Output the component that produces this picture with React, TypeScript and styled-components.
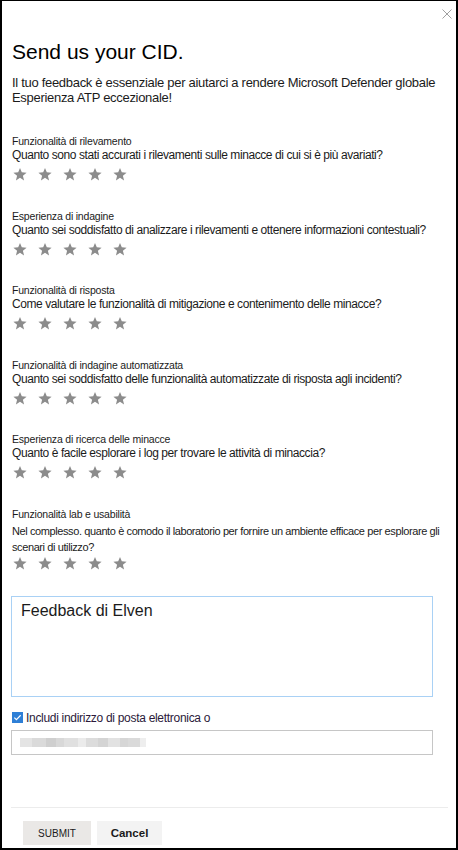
import React from "react";
import styled, { createGlobalStyle } from "styled-components";

const Global = createGlobalStyle`
  html, body { margin: 0; padding: 0; background: #fff; }
  body { font-family: "Liberation Sans", Arial, sans-serif; color: #1b1b1b; }
  * { box-sizing: border-box; }
`;

const Frame = styled.div`
  position: relative;
  width: 458px;
  height: 850px;
  border-left: 2px solid #000;
  border-right: 2px solid #000;
  border-bottom: 2px solid #000;
  border-top: 1px solid #000;
  display: flex;
  flex-direction: column;
`;

const Close = styled.button`
  position: absolute;
  top: 7px;
  right: 3px;
  width: 12px;
  height: 12px;
  padding: 0;
  border: 0;
  background: transparent;
  display: flex;
  align-items: center;
  justify-content: center;
`;

const Body = styled.div`
  flex: 1;
  padding: 38px 0 0 10px;
  display: flex;
  flex-direction: column;
`;

const Title = styled.h1`
  margin: 0;
  font-size: 21px;
  font-weight: 400;
  color: #000;
  line-height: 26px;
`;

const Intro = styled.p`
  margin: 10px 0 0;
  font-size: 13px;
  line-height: 15px;
  color: #1b1b1b;
  letter-spacing: -0.3px;
  width: 440px;
`;

const Sections = styled.div`
  margin-top: 29px;
  display: flex;
  flex-direction: column;
  gap: 26.6px;
`;

const Section = styled.div`
  display: flex;
  flex-direction: column;
`;

const Label = styled.div`
  font-size: 10.5px;
  line-height: 14px;
  color: #1b1b1b;
  letter-spacing: -0.2px;
`;

const Question = styled.div<{ $tall?: boolean }>`
  font-size: ${(p) => (p.$tall ? "11px" : "12px")};
  line-height: ${(p) => (p.$tall ? "16px" : "15px")};
  margin-top: ${(p) => (p.$tall ? "2px" : "0")};
  color: #1b1b1b;
  letter-spacing: ${(p) => (p.$tall ? "-0.4px" : "-0.42px")};
  width: ${(p) => (p.$tall ? "442px" : "432px")};
`;

const Stars = styled.div<{ $tight?: boolean }>`
  display: flex;
  gap: 11px;
  margin-top: ${(p) => (p.$tight ? "0" : "3px")};
  padding-left: 1px;
  height: 16px;
  align-items: center;
`;

const Feedback = styled.textarea`
  margin-top: 25px;
  margin-left: -1px;
  width: 422px;
  height: 101px;
  border: 1px solid #a9d1f5;
  resize: none;
  padding: 5px 9px;
  font-family: "Liberation Sans", Arial, sans-serif;
  font-size: 16px;
  color: #1b1b1b;
  outline: none;
`;

const CheckRow = styled.label`
  margin-top: 14px;
  display: flex;
  align-items: center;
  gap: 3px;
  font-size: 12px;
  color: #2b1a3a;
  letter-spacing: -0.3px;
`;

const Box = styled.span`
  width: 11px;
  height: 11px;
  background: #2e7fd6;
  display: inline-flex;
  align-items: center;
  justify-content: center;
`;

const Email = styled.div`
  margin-top: 5px;
  margin-left: -1px;
  width: 422px;
  height: 25px;
  border: 1px solid #c6c6c6;
  display: flex;
  align-items: center;
  padding-left: 8px;
`;

const Blur = styled.span<{ $c: string }>`
  display: inline-block;
  height: 9px;
  background: ${(p) => p.$c};
`;

const Footer = styled.div`
  border-top: 1px solid #ececec;
  margin: 0 8px 0 9px;
  padding: 13px 0 3px 12px;
  display: flex;
  gap: 6px;
`;

const Btn = styled.button<{ $primary?: boolean }>`
  height: 24px;
  border: 0;
  padding: 0;
  width: ${(p) => (p.$primary ? "68px" : "65px")};
  background: ${(p) => (p.$primary ? "#eae8e6" : "#f3f3f3")};
  color: #1b1b1b;
  font-family: "Liberation Sans", Arial, sans-serif;
  font-size: ${(p) => (p.$primary ? "10px" : "11.5px")};
  font-weight: ${(p) => (p.$primary ? 400 : 700)};
`;

const StarIcon = () => (
  <svg width="14" height="14" viewBox="0 0 24 24">
    <path
      d="M12 1.5l3.1 7.6 8.2.6-6.3 5.3 2 8-7-4.4-7 4.4 2-8L.7 9.7l8.2-.6z"
      fill="#8c8c8c"
    />
  </svg>
);

const sections = [
  {
    label: "Funzionalità di rilevamento",
    q: "Quanto sono stati accurati i rilevamenti sulle minacce di cui si è più avariati?",
  },
  {
    label: "Esperienza di indagine",
    q: "Quanto sei soddisfatto di analizzare i rilevamenti e ottenere informazioni contestuali?",
  },
  {
    label: "Funzionalità di risposta",
    q: "Come valutare le funzionalità di mitigazione e contenimento delle minacce?",
  },
  {
    label: "Funzionalità di indagine automatizzata",
    q: "Quanto sei soddisfatto delle funzionalità automatizzate di risposta agli incidenti?",
  },
  {
    label: "Esperienza di ricerca delle minacce",
    q: "Quanto è facile esplorare i log per trovare le attività di minaccia?",
  },
  {
    label: "Funzionalità lab e usabilità",
    q: "Nel complesso. quanto è comodo il laboratorio per fornire un ambiente efficace per esplorare gli scenari di utilizzo?",
    tall: true,
  },
];

const blur: [number, string][] = [
  [12, "#e4e4e4"], [14, "#dadada"], [10, "#cfcfcf"], [8, "#d8d8d8"], [14, "#e0e0e0"],
  [8, "#ebebeb"], [12, "#dcdcdc"], [10, "#d4d4d4"], [12, "#e2e2e2"], [8, "#d6d6d6"],
  [12, "#dadada"], [6, "#eeeeee"],
];

export default function App() {
  return (
    <>
      <Global />
      <Frame>
        <Close aria-label="Chiudi">
          <svg width="10" height="10" viewBox="0 0 10 10">
            <path d="M0.5 0.5L9.5 9.5M9.5 0.5L0.5 9.5" stroke="#a0a0a0" strokeWidth="1" />
          </svg>
        </Close>
        <Body>
          <Title>Send us your CID.</Title>
          <Intro>
            Il tuo feedback è essenziale per aiutarci a rendere Microsoft Defender globale
            <br />
            Esperienza ATP eccezionale!
          </Intro>
          <Sections>
            {sections.map((s) => (
              <Section key={s.label}>
                <Label>{s.label}</Label>
                <Question $tall={s.tall}>{s.q}</Question>
                <Stars $tight={s.tall}>
                  {[0, 1, 2, 3, 4].map((i) => (
                    <StarIcon key={i} />
                  ))}
                </Stars>
              </Section>
            ))}
          </Sections>
          <Feedback defaultValue="Feedback di Elven" />
          <CheckRow>
            <Box>
              <svg width="9" height="9" viewBox="0 0 10 10">
                <path d="M1.5 5.2l2.3 2.3L8.5 2.5" stroke="#fff" strokeWidth="1.3" fill="none" />
              </svg>
            </Box>
            Includi indirizzo di posta elettronica o
          </CheckRow>
          <Email>
            {blur.map(([w, c], i) => (
              <Blur key={i} $c={c} style={{ width: w }} />
            ))}
          </Email>
        </Body>
        <Footer>
          <Btn $primary>SUBMIT</Btn>
          <Btn>Cancel</Btn>
        </Footer>
      </Frame>
    </>
  );
}
